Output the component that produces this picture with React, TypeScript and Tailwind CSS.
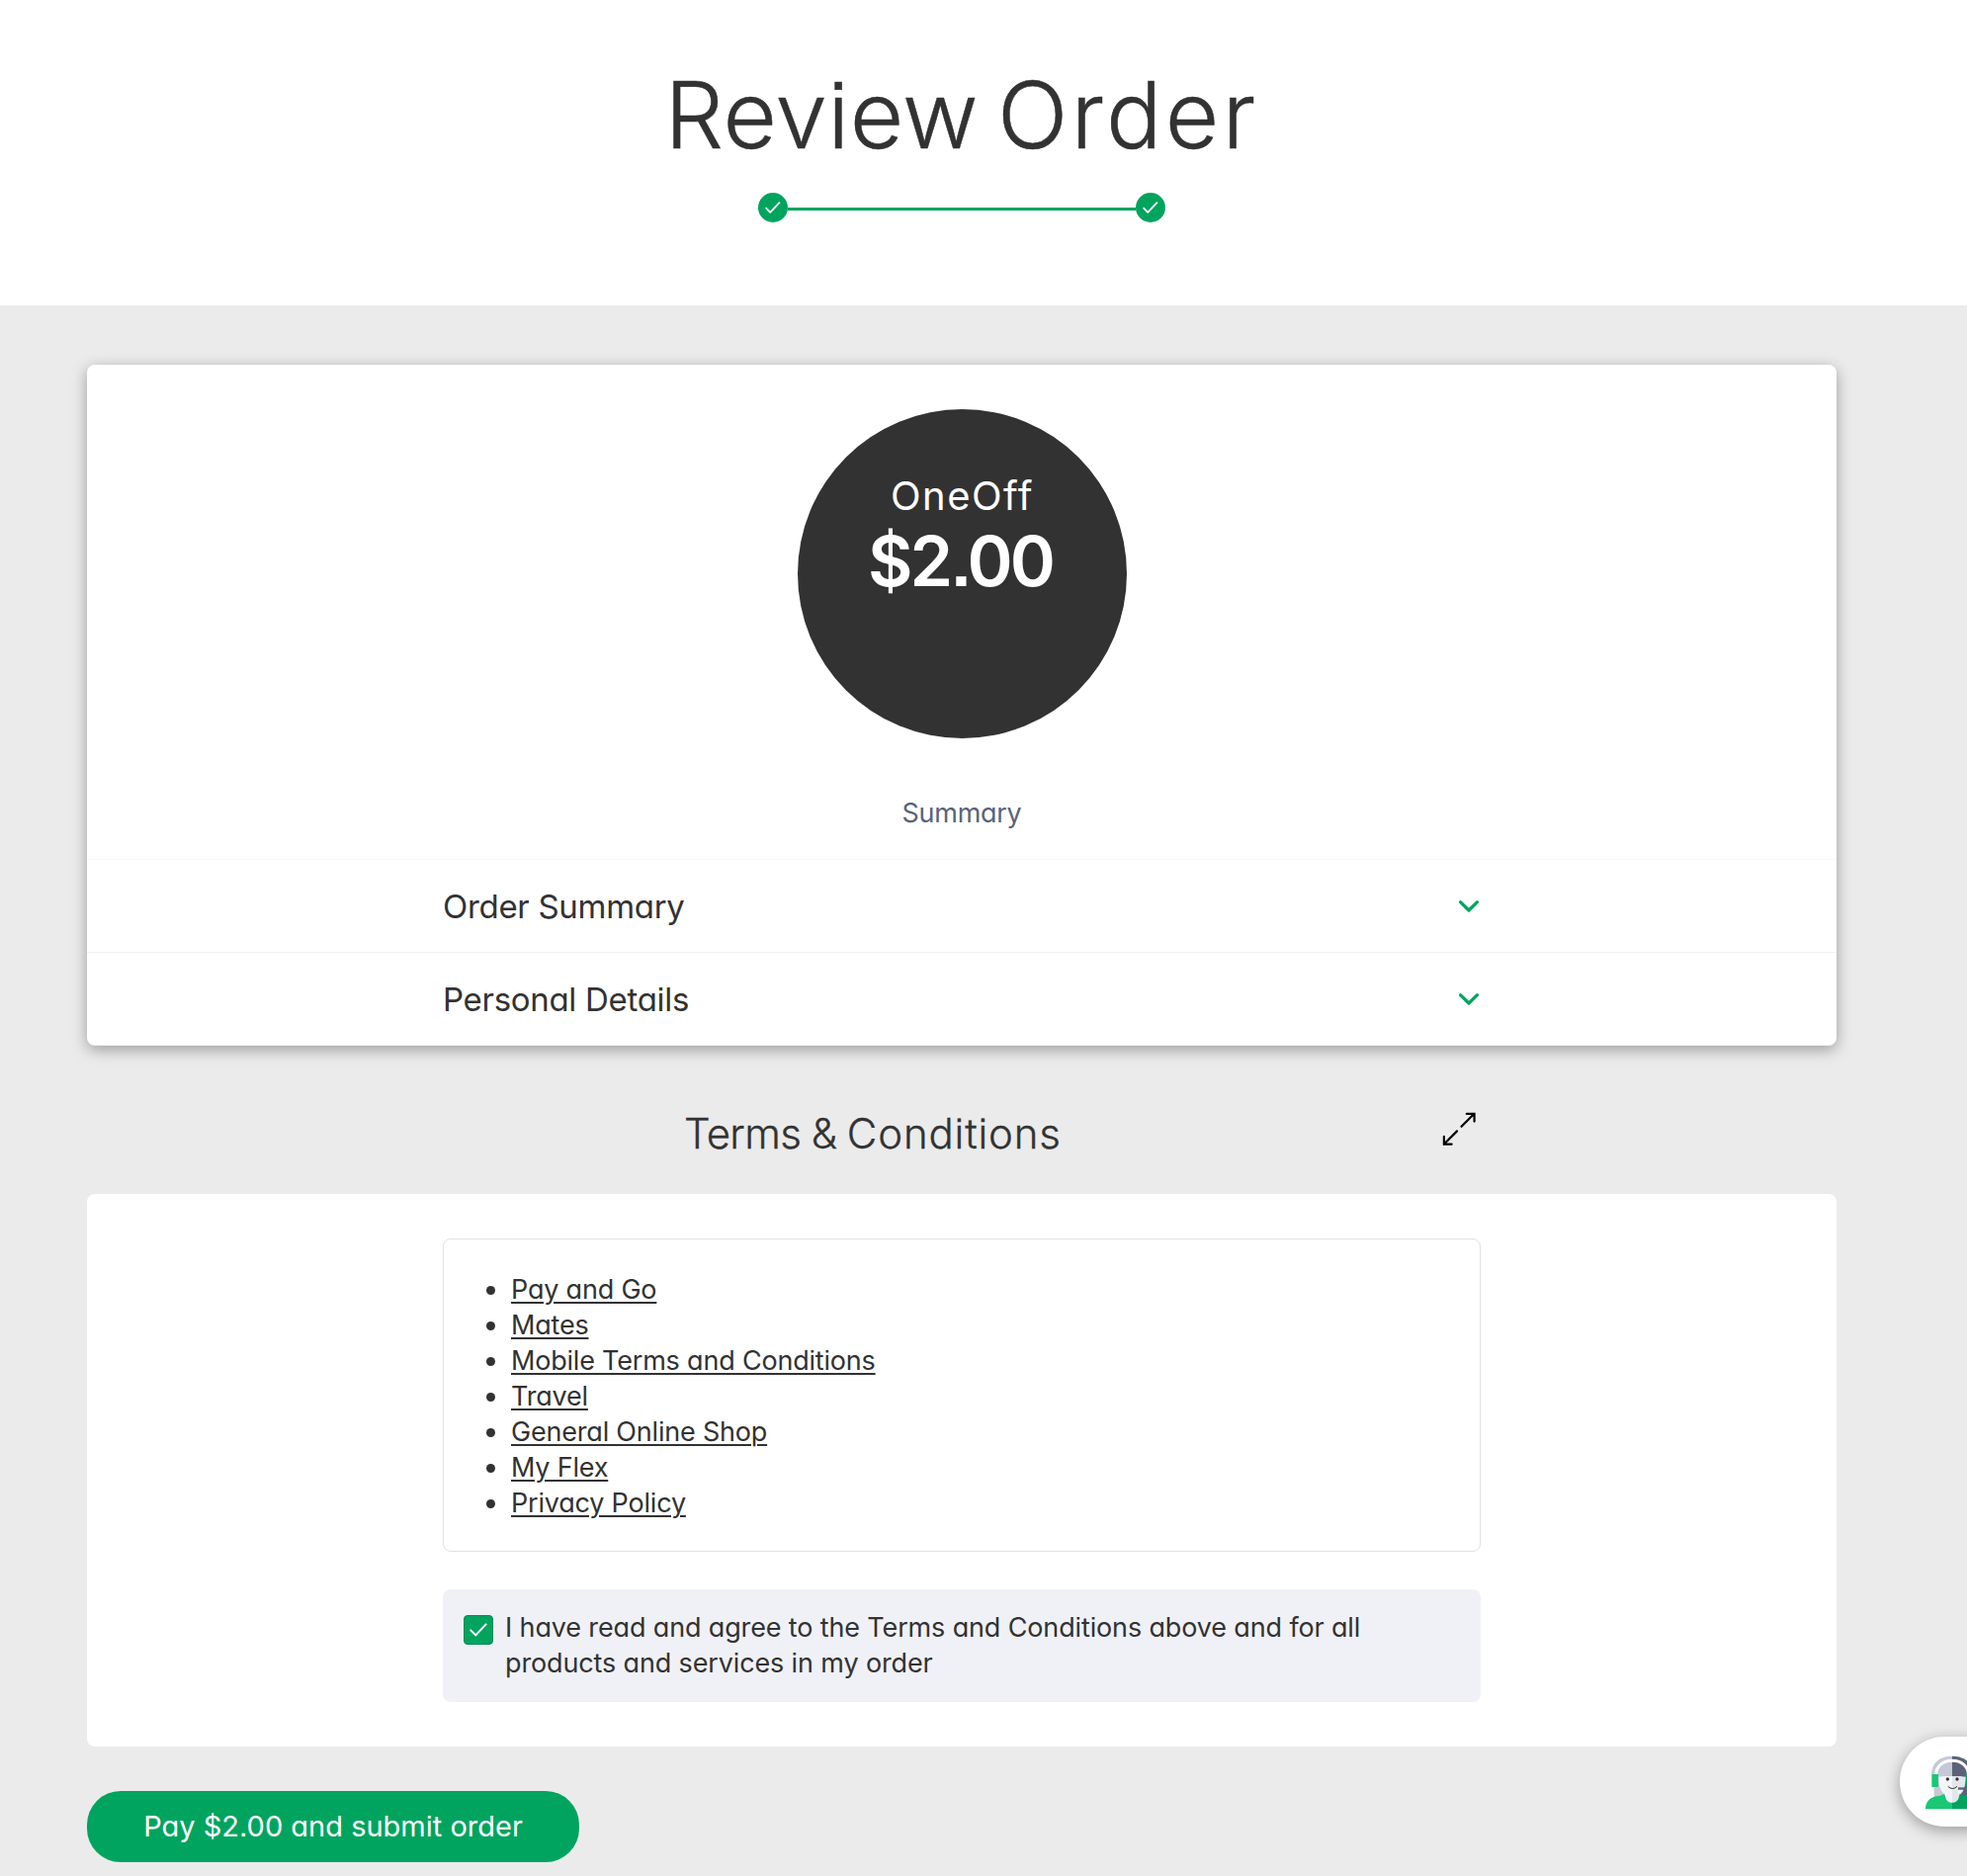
const terms = [
  "Pay and Go",
  "Mates",
  "Mobile Terms and Conditions",
  "Travel",
  "General Online Shop",
  "My Flex",
  "Privacy Policy",
];

function StepDot() {
  return (
    <span className="flex size-[30px] shrink-0 items-center justify-center rounded-full bg-[#00a45f]">
      <svg width="16" height="14" viewBox="0 0 16 14" fill="none" stroke="#fff" strokeWidth="1.8" strokeLinecap="round" strokeLinejoin="round">
        <path d="M1.2 7.6 5.2 11.8 14.4 2.2" />
      </svg>
    </span>
  );
}

function SummaryRow({ title, border }: { title: string; border: string }) {
  return (
    <div className={`flex h-[94px] justify-center border-t ${border}`}>
      <div className="flex w-[1050px] items-center justify-between">
        <h3 className="text-[33px] leading-9 tracking-[-0.3px]">{title}</h3>
        <svg className="mr-px" width="22" height="14" viewBox="0 0 22 14" fill="none" stroke="#00a45f" strokeWidth="3.2" strokeLinecap="round" strokeLinejoin="round">
          <path d="M2.5 2.7 11 11 19.5 2.7" />
        </svg>
      </div>
    </div>
  );
}

function Agent() {
  return (
    <svg className="shrink-0" width="54" height="56" viewBox="205 130 162 168">
      <path d="M231 260V190C231 155 255 138 286 138V262Z" fill="#c5c9d6" />
      <path d="M286 138C317 138 341 155 341 190V260L286 262Z" fill="#5c6379" />
      <path d="M205 296C205 270 222 257 248 256L262 250 286 262V296Z" fill="#18c874" />
      <path d="M367 296C367 270 350 257 324 256L310 250 286 262V296Z" fill="#00a45f" />
      <path d="M245 196H286V276C273 276 266 268 264 252 251 242 245 228 245 196Z" fill="#f4f5f8" />
      <path d="M327 196H286V276C299 276 306 268 308 252 321 242 327 228 327 196Z" fill="#e3e6ec" />
      <path d="M245 198C246 170 262 153 286 153V186C275 193 262 197 245 198Z" fill="#c5c9d6" />
      <path d="M327 198C326 170 310 153 286 153V186C297 193 310 197 327 198Z" fill="#5c6379" />
      <path d="M237 192C237 165 259 149 286 149S335 165 335 192" fill="none" stroke="#fff" strokeWidth="9" />
      <path d="M227 190C228 156 253 139 286 139" fill="none" stroke="#c5c9d6" strokeWidth="8" />
      <path d="M345 190C344 156 319 139 286 139" fill="none" stroke="#5c6379" strokeWidth="8" />
      <rect x="224" y="190" width="20" height="39" rx="2" fill="#18c874" />
      <rect x="328" y="190" width="20" height="39" rx="2" fill="#00a45f" />
      <path d="M304 230H336V237H304Z" fill="#5c6379" />
      <path d="M303 239H320L312 250H304Z" fill="#f4f5f8" />
      <circle cx="272" cy="205" r="5" fill="#323232" />
      <circle cx="301" cy="205" r="5" fill="#323232" />
      <path d="M274 228Q287 240 300 228" fill="none" stroke="#323232" strokeWidth="3" strokeLinecap="round" />
    </svg>
  );
}

export default function App() {
  return (
    <div className="relative h-[1898px] w-[1990px] overflow-hidden bg-[#ebebeb] font-['Inter',sans-serif] text-[#323232] [font-feature-settings:'cv11','ss07']">
      <header className="h-[309px] bg-white">
        <div className="flex w-[1946px] flex-col items-center pt-[60px]">
          <h1 className="text-[94px] leading-[112px] font-light tracking-[0.5px] [word-spacing:-8px] [-webkit-text-stroke:0.5px_#323232]">
            Review <span className="tracking-[3.2px]">Order</span>
          </h1>
          <div className="mt-[23px] flex w-[412px] items-center">
            <StepDot />
            <div className="mt-[3px] h-[3px] flex-1 bg-[#00a45f]" />
            <StepDot />
          </div>
        </div>
      </header>

      <main className="ml-[88px] w-[1770px] pt-[60px]">
        <section className="flex h-[689px] flex-col rounded-lg border-b border-[#f2f2f2] bg-white shadow-[0_4px_15px_rgba(0,0,0,0.34)]">
          <div className="mx-auto mt-[45px] flex size-[333px] flex-col items-center rounded-full bg-[#323232] pt-[66px] text-white">
            <span className="ml-px text-[40px] leading-[44px] tracking-[1.5px]">OneOff</span>
            <span className="mt-[6px] mr-[3px] text-[70px] leading-[76px] font-semibold tracking-[-3px]">$2.00</span>
          </div>
          <p className="mt-[58px] mb-[28px] text-center text-[27px] leading-9 tracking-[-0.3px] text-[#5a6379]">Summary</p>
          <SummaryRow title="Order Summary" border="border-[#f8f8f8]" />
          <SummaryRow title="Personal Details" border="border-[#f0f0f0]" />
        </section>

        <div className="mx-auto flex h-[150px] w-[1050px] items-start pt-[64px]">
          <h2 className="ml-[244px] text-[42px] leading-[50px] font-light tracking-[-0.7px] [word-spacing:-0.5px] [-webkit-text-stroke:0.3px_#323232]">
            Terms &amp; <span className="tracking-[0.8px]">Conditions</span>
          </h2>
          <svg className="mt-[2px] mr-[4px] ml-auto" width="36" height="36" viewBox="0 0 36 36" fill="none" stroke="#000" strokeWidth="2.2" strokeLinecap="round">
            <path d="M20.5 15.8 33.2 3M25.8 2.8H33.6V10.6M16 20.4 3.2 33.2M2.9 25.8V33.6H10.7" />
          </svg>
        </div>

        <section className="flex h-[559px] flex-col items-center rounded-lg bg-white pt-[45px]">
          <div className="h-[317px] w-[1050px] rounded-lg border border-[#e0e1e5] pt-[33px] pl-[43px]">
            <ul>
              {terms.map((t) => (
                <li key={t} className="flex h-9 items-center gap-[16px] text-[27px] leading-9 tracking-[-0.2px]">
                  <span className="size-[9px] rounded-full bg-[#323232]" />
                  <a className="underline decoration-2 underline-offset-[3px]">{t}</a>
                </li>
              ))}
            </ul>
          </div>
          <label className="mt-[38px] flex h-[114px] w-[1050px] rounded-lg bg-[#f0f1f6] pl-[21px] text-[27px] leading-9">
            <span className="mt-[26px] flex size-[30px] items-center justify-center rounded-[4px] border border-[#008a50] bg-[#00a45f]">
              <svg width="18" height="14" viewBox="0 0 18 14" fill="none" stroke="#fff" strokeWidth="2" strokeLinecap="round" strokeLinejoin="round">
                <path d="M1.3 7.4 6.3 12.4 16.6 1.4" />
              </svg>
            </span>
            <span className="mt-[21px] ml-[12px] w-[880px] tracking-[-0.14px]">
              I have read and agree to the Terms and Conditions above and for all products and services in my order
            </span>
          </label>
        </section>

        <button className="mt-[45px] flex h-[72px] w-[498px] items-center justify-center rounded-[34px] bg-[#00a45f] text-[29px] leading-9 text-white">
          Pay $2.00 and submit order
        </button>
      </main>

      <div className="absolute top-[1757px] left-[1922px] flex h-[91px] w-[140px] items-center rounded-full bg-white pl-[26px] shadow-[0_4px_15px_rgba(0,0,0,0.34)]">
        <Agent />
      </div>
    </div>
  );
}
